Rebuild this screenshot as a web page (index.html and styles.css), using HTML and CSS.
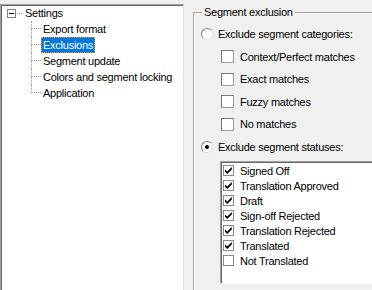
FILE: index.html
```html
<!DOCTYPE html>
<html>
<head>
	<meta charset="UTF-8">
	<title>Settings</title>
	<link rel="stylesheet" href="styles.css">
</head>
<body>
<div class="dialog">
	<div class="tree">
		<div class="row root">
			<span class="expander"><span class="minus"></span></span>
			<span class="rootstub"></span>
			<span class="label">Settings</span>
		</div>
		<ul class="children">
			<li class="row"><span class="stub"><span class="stub-top"></span><span class="stub-bottom"></span></span><span class="label">Export format</span></li>
			<li class="row"><span class="stub"><span class="stub-top"></span><span class="stub-bottom"></span></span><span class="label selected">Exclusions</span></li>
			<li class="row"><span class="stub"><span class="stub-top"></span><span class="stub-bottom"></span></span><span class="label">Segment update</span></li>
			<li class="row"><span class="stub"><span class="stub-top"></span><span class="stub-bottom"></span></span><span class="label">Colors and segment locking</span></li>
			<li class="row last"><span class="stub"><span class="stub-top"></span><span class="stub-bottom"></span></span><span class="label">Application</span></li>
		</ul>
	</div>

	<fieldset class="group">
		<legend>Segment exclusion</legend>
		<div class="opt"><span class="radio"></span><span>Exclude segment categories:</span></div>
		<div class="opt sub"><span class="check"></span><span>Context/Perfect matches</span></div>
		<div class="opt sub"><span class="check"></span><span>Exact matches</span></div>
		<div class="opt sub"><span class="check"></span><span>Fuzzy matches</span></div>
		<div class="opt sub"><span class="check"></span><span>No matches</span></div>
		<div class="opt"><span class="radio on"><span class="dot"></span></span><span>Exclude segment statuses:</span></div>
		<ul class="list">
			<li><span class="mini on"><svg viewBox="0 0 9 9" width="9" height="9"><path d="M1 3.5 L3.2 5.6 L7.8 1 L7.8 3.4 L3.2 8 L1 5.8 Z" fill="#000"/></svg></span>Signed Off</li>
			<li><span class="mini on"><svg viewBox="0 0 9 9" width="9" height="9"><path d="M1 3.5 L3.2 5.6 L7.8 1 L7.8 3.4 L3.2 8 L1 5.8 Z" fill="#000"/></svg></span>Translation Approved</li>
			<li><span class="mini on"><svg viewBox="0 0 9 9" width="9" height="9"><path d="M1 3.5 L3.2 5.6 L7.8 1 L7.8 3.4 L3.2 8 L1 5.8 Z" fill="#000"/></svg></span>Draft</li>
			<li><span class="mini on"><svg viewBox="0 0 9 9" width="9" height="9"><path d="M1 3.5 L3.2 5.6 L7.8 1 L7.8 3.4 L3.2 8 L1 5.8 Z" fill="#000"/></svg></span>Sign-off Rejected</li>
			<li><span class="mini on"><svg viewBox="0 0 9 9" width="9" height="9"><path d="M1 3.5 L3.2 5.6 L7.8 1 L7.8 3.4 L3.2 8 L1 5.8 Z" fill="#000"/></svg></span>Translation Rejected</li>
			<li><span class="mini on"><svg viewBox="0 0 9 9" width="9" height="9"><path d="M1 3.5 L3.2 5.6 L7.8 1 L7.8 3.4 L3.2 8 L1 5.8 Z" fill="#000"/></svg></span>Translated</li>
			<li><span class="mini"></span>Not Translated</li>
		</ul>
	</fieldset>
</div>
</body>
</html>
```

FILE: styles.css
```css
*{margin: 0;padding: 0;box-sizing: border-box;}
ul,li{list-style: none;}

html,body{width: 372px;height: 290px;overflow: hidden;}
body{background: #f0f0f0;color: #000;font-family: "Liberation Sans", Arial, sans-serif;font-size: 11px;letter-spacing: -0.25px;}

.dialog{display: flex;align-items: flex-start;}

/* tree */
.tree{flex: none;width: 184px;height: 286px;margin-top: 4px;padding-left: 6px;background: #fff;border: 1px solid;border-bottom: none;border-color: #a0a0a0 #e3e3e3 #e3e3e3 #a0a0a0;box-shadow: inset 1px 1px 0 #696969;}
.row{display: flex;align-items: center;height: 16px;line-height: 16px;white-space: nowrap;}
.expander{flex: none;display: flex;align-items: center;justify-content: center;width: 9px;height: 9px;border: 1px solid #808080;background: #fff;}
.minus{width: 5px;height: 1px;background: #000;}
.rootstub{flex: none;width: 5px;height: 1px;margin: 0 1px 0 1px;border-top: 1px dotted #a0a0a0;}
.label{padding: 0 2px;height: 16px;}
.label.selected{background: #0078d7;color: #fff;outline: 1px dotted #ff8728;outline-offset: -1px;}
.children{margin-left: 24px;}
.stub{flex: none;display: flex;flex-direction: column;width: 10px;height: 16px;}
.stub-top{height: 8px;border-left: 1px dotted #a0a0a0;border-bottom: 1px dotted #a0a0a0;}
.stub-bottom{flex: 1;border-left: 1px dotted #a0a0a0;}
.last .stub-bottom{border-left: none;}

/* group box */
.group{flex: none;width: 179px;height: 284px;margin: 6px 0 0 9px;padding: 4px 0 0 7px;border: 1px solid #a0a0a0;border-right: none;border-bottom: none;box-shadow: inset 1px 1px 0 #fff;}
.group legend{margin-left: 1px;padding: 0 2px;line-height: 13px;background: #f0f0f0;}
.opt{display: flex;align-items: center;height: 22.5px;white-space: nowrap;}
.opt.sub{padding-left: 20px;}
.radio{flex: none;display: flex;align-items: center;justify-content: center;width: 12px;height: 12px;margin-right: 5px;border-radius: 50%;background: #fff;border: 1px solid;border-color: #808080 #e3e3e3 #e3e3e3 #808080;}
.radio .dot{width: 4px;height: 4px;border-radius: 50%;background: #000;}
.check{flex: none;width: 13px;height: 13px;margin-right: 6px;background: #fff;border: 1px solid;border-color: #7a7a7a #a0a0a0 #a0a0a0 #7a7a7a;}

.list{width: 152px;height: 123px;margin: 3px 0 0 19px;padding: 1px;background: #fff;border: 1px solid;border-right: none;border-color: #a0a0a0 #fff #fff #a0a0a0;box-shadow: inset 1px 1px 0 #696969;}
.list li{display: flex;align-items: center;height: 15px;white-space: nowrap;}
.mini{flex: none;display: flex;align-items: center;justify-content: center;width: 11px;height: 11px;margin: 0 6px 0 1px;background: #fff;border: 1px solid #8a8a8a;}
```
